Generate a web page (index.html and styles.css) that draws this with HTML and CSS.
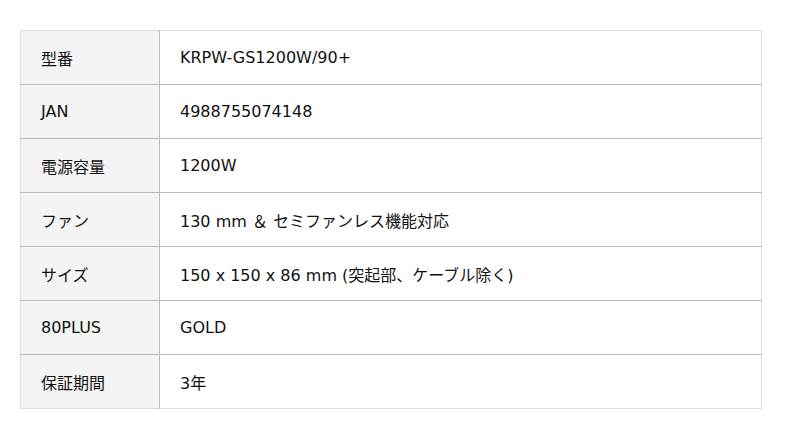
FILE: index.html
```html
<!DOCTYPE html>
<html lang="ja">
<head>
<meta charset="utf-8">
<link rel="stylesheet" href="styles.css">
</head>
<body>
<table class="spec">
  <tr><th>型番</th><td>KRPW-GS1200W/90+</td></tr>
  <tr><th>JAN</th><td>4988755074148</td></tr>
  <tr><th>電源容量</th><td>1200W</td></tr>
  <tr><th>ファン</th><td>130 mm ＆ セミファンレス機能対応</td></tr>
  <tr><th>サイズ</th><td>150 x 150 x 86 mm (突起部、ケーブル除く)</td></tr>
  <tr><th>80PLUS</th><td>GOLD</td></tr>
  <tr><th>保証期間</th><td>3年</td></tr>
</table>
</body>
</html>
```
FILE: styles.css
```css
html, body {
  margin: 0;
  padding: 0;
  background: #fff;
}
body {
  padding: 30px 0 0 20px;
  font-family: "DejaVu Sans", "Noto Sans CJK JP", sans-serif;
  font-size: 16px;
  color: #111;
}
.spec {
  width: 742px;
  border-collapse: collapse;
  border: 1px solid #ddd;
}
.spec tr {
  height: 54px;
}
.spec th,
.spec td {
  text-align: left;
  font-weight: normal;
  padding: 0 20px;
  border-top: 1px solid #bbb;
  vertical-align: middle;
}
.spec tr:first-child th,
.spec tr:first-child td {
  border-top: 1px solid #ddd;
}
.spec th {
  width: 98px;
  background: #f4f4f4;
  border-right: 1px solid #bbb;
}
```
